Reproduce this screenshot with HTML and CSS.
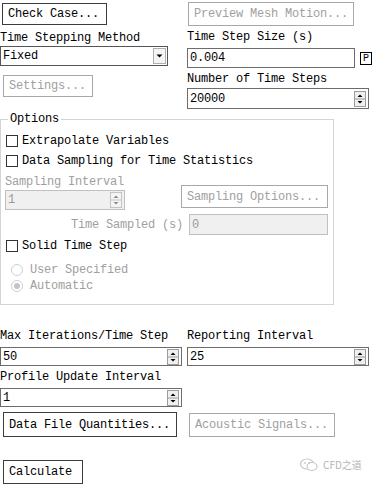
FILE: index.html
```html
<!DOCTYPE html>
<html>
<head>
<meta charset="utf-8">
<link rel="stylesheet" href="styles.css">
</head>
<body>
<div class="page">
  <div class="top">
    <div class="col">
      <button class="btn check">Check Case...</button>
      <div class="label lbl-tsm">Time Stepping Method</div>
      <div class="field select">
        <span>Fixed</span>
        <svg class="drop" width="13" height="16" viewBox="0 0 13 16"><rect x="0.5" y="0.5" width="12" height="15" fill="#f4f4f4" stroke="#b0b0b0"/><path d="M3.5 6.5 H9.5 L6.5 9.5Z" fill="#000"/></svg>
      </div>
      <button class="btn disabled settings">Settings...</button>
    </div>
    <div class="col">
      <button class="btn disabled preview">Preview Mesh Motion...</button>
      <div class="label lbl-tss">Time Step Size (s)</div>
      <div class="row-p">
        <div class="field tss">0.004</div>
        <span class="pbox">P</span>
      </div>
      <div class="label lbl-nts">Number of Time Steps</div>
      <div class="field spin nts">20000
        <svg class="spinner" width="12" height="16" viewBox="0 0 12 16"><rect x="0.5" y="0.5" width="11" height="15" fill="#f0f0f0" stroke="#9c9c9c"/><line x1="1" y1="8" x2="11" y2="8" stroke="#9c9c9c"/><path d="M6 3.5 L8.5 6 H3.5Z" fill="#000"/><path d="M3.5 10 H8.5 L6 12.5Z" fill="#000"/></svg>
      </div>
    </div>
  </div>

  <fieldset class="group">
    <legend>Options</legend>
    <div class="check-row r-extra"><span class="cb"></span><span>Extrapolate Variables</span></div>
    <div class="check-row r-data"><span class="cb"></span><span>Data Sampling for Time Statistics</span></div>
    <div class="sampling">
      <div class="sub">
        <div class="label gray lbl-si">Sampling Interval</div>
        <div class="field spin disabled-field si">1
          <svg class="spinner" width="12" height="16" viewBox="0 0 12 16"><rect x="0.5" y="0.5" width="11" height="15" fill="#f4f4f4" stroke="#c4c4c4"/><line x1="1" y1="8" x2="11" y2="8" stroke="#c4c4c4"/><path d="M6 3.5 L8.5 6 H3.5Z" fill="#8a8a8a"/><path d="M3.5 10 H8.5 L6 12.5Z" fill="#8a8a8a"/></svg>
        </div>
      </div>
      <button class="btn disabled sopt">Sampling Options...</button>
    </div>
    <div class="ts-row">
      <span class="gray ts-label">Time Sampled (s)</span>
      <div class="field disabled-field ts">0</div>
    </div>
    <div class="check-row r-solid"><span class="cb"></span><span>Solid Time Step</span></div>
    <div class="radio-row r-user gray"><span class="rb"></span><span>User Specified</span></div>
    <div class="radio-row r-auto gray"><span class="rb on"></span><span>Automatic</span></div>
  </fieldset>

  <div class="bottom">
    <div class="label">Max Iterations/Time Step</div>
    <div class="label">Reporting Interval</div>
    <div class="field spin b-in">50
      <svg class="spinner" width="12" height="16" viewBox="0 0 12 16"><rect x="0.5" y="0.5" width="11" height="15" fill="#f0f0f0" stroke="#9c9c9c"/><line x1="1" y1="8" x2="11" y2="8" stroke="#9c9c9c"/><path d="M6 3.5 L8.5 6 H3.5Z" fill="#000"/><path d="M3.5 10 H8.5 L6 12.5Z" fill="#000"/></svg>
    </div>
    <div class="field spin b-in">25
      <svg class="spinner" width="12" height="16" viewBox="0 0 12 16"><rect x="0.5" y="0.5" width="11" height="15" fill="#f0f0f0" stroke="#9c9c9c"/><line x1="1" y1="8" x2="11" y2="8" stroke="#9c9c9c"/><path d="M6 3.5 L8.5 6 H3.5Z" fill="#000"/><path d="M3.5 10 H8.5 L6 12.5Z" fill="#000"/></svg>
    </div>
    <div class="label lbl-pui">Profile Update Interval</div>
    <div></div>
    <div class="field spin b-in pui">1
      <svg class="spinner" width="12" height="16" viewBox="0 0 12 16"><rect x="0.5" y="0.5" width="11" height="15" fill="#f0f0f0" stroke="#9c9c9c"/><line x1="1" y1="8" x2="11" y2="8" stroke="#9c9c9c"/><path d="M6 3.5 L8.5 6 H3.5Z" fill="#000"/><path d="M3.5 10 H8.5 L6 12.5Z" fill="#000"/></svg>
    </div>
    <div></div>
    <button class="btn dfq">Data File Quantities...</button>
    <button class="btn disabled acoustic">Acoustic Signals...</button>
  </div>

  <button class="btn calc">Calculate</button>

  <div class="watermark">
    <svg width="20" height="14" viewBox="0 0 20 14"><ellipse cx="8" cy="6" rx="6.5" ry="5" fill="none" stroke="#c8c8c8" stroke-width="1.2"/><ellipse cx="13" cy="8.5" rx="5" ry="4" fill="#fff" stroke="#c8c8c8" stroke-width="1.2"/><circle cx="6" cy="5" r="0.9" fill="#c8c8c8"/><circle cx="10" cy="5" r="0.9" fill="#c8c8c8"/></svg>
    <span>CFD之道</span>
  </div>
</div>
</body>
</html>
```
FILE: styles.css
```css
* { box-sizing: border-box; }
body {
  margin: 0;
  background: #fff;
  font-family: "Liberation Mono", "Noto Sans CJK SC", monospace;
  font-size: 12px;
  letter-spacing: -0.2px;
  color: #000;
}
.page { position: relative; width: 374px; height: 486px; overflow: hidden; }

.label { line-height: 14px; height: 14px; white-space: nowrap; }
.gray { color: #a0a0a0; }

.btn {
  display: block;
  font: inherit;
  letter-spacing: inherit;
  background: #fff;
  border: 1px solid #3c3c3c;
  color: #000;
  padding: 0 0 0 5px;
  text-align: left;
  white-space: nowrap;
  border-radius: 0;
}
.btn.disabled { border-color: #a8a8a8; color: #a0a0a0; }

.field {
  position: relative;
  border: 1px solid #6c6c6c;
  background: #fff;
  padding-left: 2px;
  display: flex;
  align-items: center;
  white-space: nowrap;
}
.disabled-field { background: #f0f0f0; border-color: #c0c0c0; color: #9a9a9a; }
.spinner { position: absolute; right: 2px; top: 50%; margin-top: -8px; }

.top {
  display: grid;
  grid-template-columns: 187px 187px;
}
.col { display: flex; flex-direction: column; align-items: flex-start; }

.check { margin: 3px 0 0 2px; width: 105px; height: 22px; }
.lbl-tsm { margin-top: 6px; }
.select { margin-top: 1px; width: 168px; height: 20px; border-color: #555; }
.select .drop { position: absolute; right: 1px; top: 1px; }
.settings { margin: 9px 0 0 3px; width: 90px; height: 22px; }

.preview { margin: 2px 0 0 1px; width: 166px; height: 24px; }
.lbl-tss { margin-top: 4px; }
.row-p { margin-top: 4px; display: flex; align-items: center; }
.tss { width: 168px; height: 20px; }
.pbox {
  margin-left: 5px;
  width: 12px; height: 13px;
  border: 1px solid #000;
  font-size: 10px;
  line-height: 11px;
  text-align: center;
  letter-spacing: 0;
}
.lbl-nts { margin-top: 4px; }
.nts { margin-top: 2px; width: 182px; height: 21px; }

.group {
  margin: 3px 0 0 0;
  width: 334px;
  padding: 0 0 11px 0;
  border: 1px solid #d4d4d4;
  min-width: 0;
}
.group legend {
  margin-left: 7px;
  padding: 0 2px;
  line-height: 14px;
}
.check-row, .radio-row {
  display: flex;
  align-items: center;
  height: 14px;
  line-height: 14px;
  white-space: nowrap;
}
.cb {
  width: 12px; height: 12px;
  border: 1px solid #333;
  background: #fff;
  margin: 0 4px 0 5px;
  flex: none;
}
.rb {
  width: 12px; height: 12px;
  border: 1px solid #cfcfcf;
  border-radius: 50%;
  background: #fff;
  margin: 0 7px 0 10px;
  flex: none;
  display: flex; align-items: center; justify-content: center;
}
.rb.on::after {
  content: "";
  width: 6px; height: 6px;
  border-radius: 50%;
  background: #c4c4c4;
}
.r-extra { margin-top: 8px; }
.r-data { margin-top: 6px; }
.sampling {
  margin-top: 7px;
  display: grid;
  grid-template-columns: 180px 147px;
  align-items: start;
}
.sub { padding-left: 4px; }
.si { margin-top: 1px; width: 120px; height: 20px; }
.sopt { margin-top: 10px; width: 147px; height: 23px; }
.ts-row { margin-top: 4px; display: flex; align-items: center; }
.ts-label { width: 182px; text-align: right; }
.ts { margin-left: 6px; width: 139px; height: 21px; }
.r-solid { margin-top: 4px; }
.r-user { margin-top: 10px; }
.r-auto { margin-top: 2px; }

.bottom {
  margin-top: 24px;
  display: grid;
  grid-template-columns: 181px 187px;
  column-gap: 6px;
  align-items: start;
}
.bottom .b-in { margin-top: 4px; width: 182px; height: 19px; }
.bottom .label { margin-top: 0; }
.lbl-pui { margin-top: 4px !important; }
.pui { margin-top: 4px; }
.dfq { margin: 5px 0 0 3px; width: 174px; height: 25px; }
.acoustic { margin: 6px 0 0 2px; width: 146px; height: 24px; }
.calc { margin: 23px 0 0 3px; width: 80px; height: 24px; }

.watermark {
  position: absolute;
  left: 299px;
  top: 457px;
  display: flex;
  align-items: center;
  gap: 4px;
  color: #b4b4b4;
  font-family: "Noto Sans CJK SC", sans-serif;
  font-size: 10px;
  letter-spacing: 0;
}
```
